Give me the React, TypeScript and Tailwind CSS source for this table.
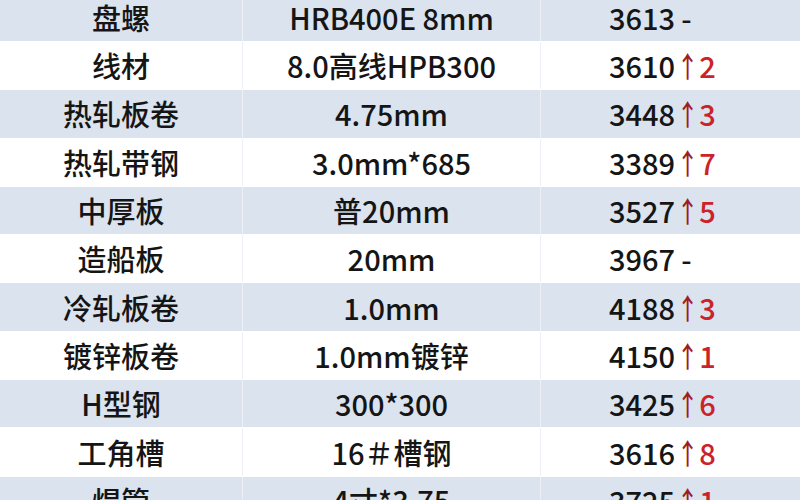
const rows = [
  { name: "盘螺", spec: "HRB400E 8mm", price: "3613", change: null },
  { name: "线材", spec: "8.0高线HPB300", price: "3610", change: "2" },
  { name: "热轧板卷", spec: "4.75mm", price: "3448", change: "3" },
  { name: "热轧带钢", spec: "3.0mm*685", price: "3389", change: "7" },
  { name: "中厚板", spec: "普20mm", price: "3527", change: "5" },
  { name: "造船板", spec: "20mm", price: "3967", change: null },
  { name: "冷轧板卷", spec: "1.0mm", price: "4188", change: "3" },
  { name: "镀锌板卷", spec: "1.0mm镀锌", price: "4150", change: "1" },
  { name: "H型钢", spec: "300*300", price: "3425", change: "6" },
  { name: "工角槽", spec: "16＃槽钢", price: "3616", change: "8" },
  { name: "焊管", spec: "4寸*3.75", price: "3725", change: "1" },
]

export default function App() {
  return (
    <div className="w-[800px] h-[500px] overflow-hidden bg-white font-['Noto_Sans_CJK_SC','Noto_Sans',sans-serif] font-medium text-[#151515]">
      <div className="-mt-[6.3px]">
        {rows.map((r, i) => (
          <div
            key={r.name}
            className={`grid grid-cols-[243px_298px_259px] h-[48.3px] items-stretch border-b border-white ${
              i % 2 === 0 ? "bg-[#dae3ee]" : "bg-white"
            }`}
          >
            <div className="flex items-center justify-center border-r border-[#edf1f6] text-[29px] leading-none">
              {r.name}
            </div>
            <div className="flex items-center justify-center border-r border-[#edf1f6] text-[29px] leading-none">
              {r.spec}
            </div>
            <div className="flex items-center pl-[68px] text-[29px] leading-none">
              <span>{r.price}</span>
              {r.change ? (
                <>
                  <span className="text-[#9e1c22] -ml-[2px] -mr-[3px] scale-x-75 inline-block">↑</span>
                  <span className="text-[#cc2229]">{r.change}</span>
                </>
              ) : (
                <span className="ml-[6px]">-</span>
              )}
            </div>
          </div>
        ))}
      </div>
    </div>
  )
}
